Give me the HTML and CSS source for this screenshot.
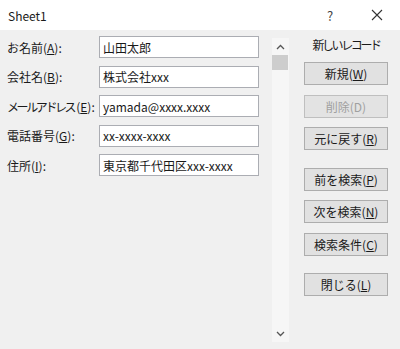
FILE: index.html
```html
<!DOCTYPE html>
<html lang="ja">
<head>
<meta charset="utf-8">
<link rel="stylesheet" href="styles.css">
</head>
<body>
<div class="window">
  <div class="titlebar">
    <span class="title">Sheet1</span>
    <span class="help">?</span>
    <span class="close"><svg width="12" height="12" viewBox="0 0 12 12"><path d="M1 1 L11 11 M11 1 L1 11" stroke="#333" stroke-width="1.1" fill="none"/></svg></span>
  </div>
  <div class="content">
    <div class="form">
      <label class="lbl">お名前(<u>A</u>):</label><div class="field">山田太郎</div>
      <label class="lbl">会社名(<u>B</u>):</label><div class="field">株式会社xxx</div>
      <label class="lbl"><span class="kana">メールアドレス</span>(<u>E</u>):</label><div class="field">yamada@xxxx.xxxx</div>
      <label class="lbl">電話番号(<u>G</u>):</label><div class="field">xx-xxxx-xxxx</div>
      <label class="lbl">住所(<u>I</u>):</label><div class="field">東京都千代田区xxx-xxxx</div>
    </div>
    <div class="scrollbar">
      <div class="arrow"><svg width="9" height="6" viewBox="0 0 9 6"><path d="M1 5 L4.5 1.5 L8 5" stroke="#555" stroke-width="1.3" fill="none"/></svg></div>
      <div class="thumb"></div>
      <div class="track"></div>
      <div class="arrow"><svg width="9" height="6" viewBox="0 0 9 6"><path d="M1 1 L4.5 4.5 L8 1" stroke="#555" stroke-width="1.3" fill="none"/></svg></div>
    </div>
    <div class="side">
      <div class="caption">新しいレコード</div>
      <div class="group">
        <div class="btn">新規(<u>W</u>)</div>
        <div class="btn disabled">削除(D)</div>
        <div class="btn">元に戻す(<u>R</u>)</div>
      </div>
      <div class="group">
        <div class="btn">前を検索(<u>P</u>)</div>
        <div class="btn">次を検索(<u>N</u>)</div>
        <div class="btn">検索条件(<u>C</u>)</div>
      </div>
      <div class="group">
        <div class="btn">閉じる(<u>L</u>)</div>
      </div>
    </div>
  </div>
</div>
</body>
</html>
```

FILE: styles.css
```css
html, body {
  margin: 0;
  padding: 0;
}
body {
  font-family: "Noto Sans CJK JP", "Noto Sans", sans-serif;
  font-size: 12px;
  color: #1a1a1a;
}
.window {
  width: 400px;
  height: 349px;
  background: #f0f0f0;
  display: flex;
  flex-direction: column;
  overflow: hidden;
}
.titlebar {
  height: 30px;
  background: #ffffff;
  display: flex;
  align-items: center;
  padding-left: 8px;
  flex: none;
}
.title {
  font-size: 12px;
  color: #1a1a1a;
  flex: 1;
}
.help {
  font-size: 13px;
  color: #444;
  width: 12px;
  text-align: center;
  margin-right: 35px;
}
.close {
  display: flex;
  width: 12px;
  margin-right: 17px;
}
.content {
  flex: 1;
  display: flex;
}
.form {
  width: 265px;
  padding: 6px 0 0 7px;
  display: grid;
  grid-template-columns: 92px 160px;
  grid-auto-rows: 22px;
  row-gap: 7.5px;
  align-content: start;
}
.lbl {
  display: flex;
  align-items: center;
  white-space: nowrap;
}
.kana {
  letter-spacing: -2.4px;
  margin-right: 2px;
}
.field {
  background: #fff;
  border: 1px solid #abadb3;
  padding: 0 3px;
  display: flex;
  align-items: center;
  white-space: nowrap;
  overflow: hidden;
}
.scrollbar {
  width: 17px;
  margin-top: 8px;
  height: 304px;
  background: #f6f6f6;
  display: flex;
  flex-direction: column;
}
.arrow {
  height: 17px;
  display: flex;
  align-items: center;
  justify-content: center;
  flex: none;
}
.thumb {
  height: 15px;
  background: #cdcdcd;
  margin: 0 1px 0 0;
  flex: none;
}
.track {
  flex: 1;
}
.side {
  width: 84px;
  padding: 5px 0 0 15px;
  display: flex;
  flex-direction: column;
}
.caption {
  height: 20px;
  line-height: 20px;
  text-align: center;
  margin-bottom: 7px;
  white-space: nowrap;
  letter-spacing: -2.4px;
}
.group {
  display: flex;
  flex-direction: column;
  gap: 9.5px;
}
.group + .group {
  margin-top: 17.5px;
}
.btn {
  height: 21px;
  border: 1px solid #adadad;
  background: #e1e1e1;
  display: flex;
  align-items: center;
  justify-content: center;
  white-space: nowrap;
}
.btn.disabled {
  color: #a0a0a0;
  border-color: #bfbfbf;
  background: #e3e3e3;
}
```
